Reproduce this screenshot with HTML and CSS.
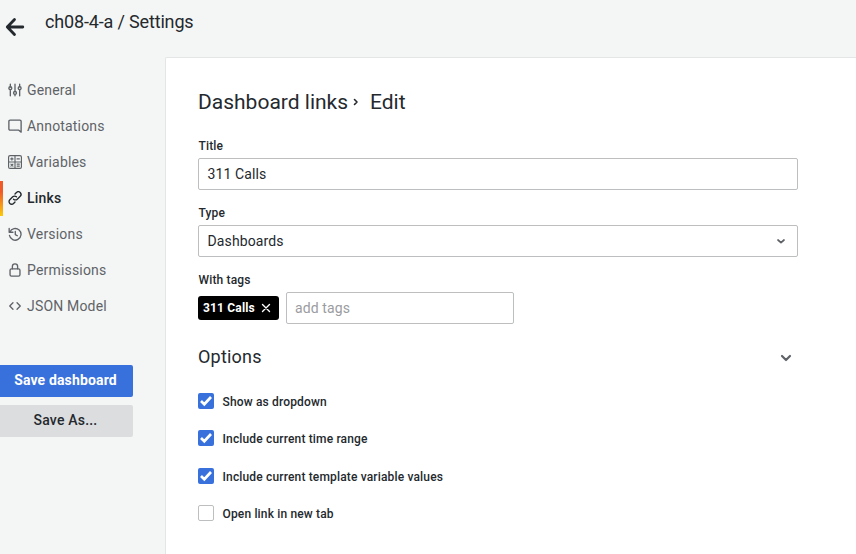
FILE: index.html
```html
<!DOCTYPE html>
<html lang="en">
<head>
<meta charset="utf-8">
<title>ch08-4-a / Settings</title>
<link rel="stylesheet" href="styles.css">
</head>
<body>
<div class="page">
  <header class="toolbar">
    <svg class="back" viewBox="0 0 24 24"><path d="M19.800 12H4.300M11.500 4.500 4.300 12l7.200 7.500"/></svg>
    <h1 class="page-title">ch08-4-a / Settings</h1>
  </header>
  <div class="body">
    <aside class="sidebar">
      <nav class="menu">
        <a class="item"><svg class="icon" viewBox="0 0 24 24"><path d="M4 2v5M4 13v9M12 2v12M12 20v2M20 2v4M20 12v10"/><circle cx="4" cy="9" r="2.500"/><circle cx="12" cy="17" r="2.500"/><circle cx="20" cy="9" r="2.500"/></svg>General</a>
        <a class="item"><svg class="icon" viewBox="0 0 24 24"><path d="M22.500 22.500 18 19H3.500a2 2 0 0 1-2-2V4a2 2 0 0 1 2-2h17a2 2 0 0 1 2 2z"/></svg>Annotations</a>
        <a class="item"><svg class="icon thin" viewBox="0 0 24 24"><rect x="1" y="1" width="22" height="22" rx="2.500"/><path d="M12 1v22M1 12h22M4.700 6.700h4M6.700 4.700v4M15.500 6.700h4M15.500 15.500h4M15.500 19h4M5 15.500l3.500 3.500M8.500 15.500 5 19"/></svg>Variables</a>
        <a class="item active"><svg class="icon" viewBox="0 0 24 24"><path d="M9.500 14a4.500 4.500 0 0 0 6.400 0l5-5a4.500 4.500 0 0 0-6.400-6.400l-2.500 2.500M14.500 10a4.500 4.500 0 0 0-6.400 0l-5 5a4.500 4.500 0 0 0 6.400 6.400l2.500-2.500"/></svg>Links</a>
        <a class="item"><svg class="icon" viewBox="0 0 24 24"><path d="M2 2.500v6.500h6.500M3.200 8.500A10 10 0 1 1 2.500 14.500M12.500 7.500v5.500l3.500 2"/></svg>Versions</a>
        <a class="item"><svg class="icon" viewBox="0 0 24 24"><rect x="3.500" y="10" width="17" height="12.500" rx="2.500"/><path d="M7.500 10V6a4.500 4.500 0 0 1 9 0v4"/></svg>Permissions</a>
        <a class="item"><svg class="icon" viewBox="0 0 24 24"><path d="M8.500 6.500 3 12l5.500 5.500M15.500 6.500 21 12l-5.500 5.500"/></svg>JSON Model</a>
      </nav>
      <div class="actions">
        <button class="button primary">Save dashboard</button>
        <button class="button secondary">Save As...</button>
      </div>
    </aside>
    <main class="content">
      <h2 class="heading"><span class="crumb-root">Dashboard links</span><svg class="crumb" viewBox="0 0 12 12"><path d="m4.500 3.500 2.500 2.500-2.500 2.500"/></svg><span>Edit</span></h2>
      <div class="field">
        <label class="label">Title</label>
        <div class="input">311 Calls</div>
      </div>
      <div class="field">
        <label class="label">Type</label>
        <div class="input select">Dashboards<svg class="caret" viewBox="0 0 16 16"><path d="m5 7 3 2.700L11 7"/></svg></div>
      </div>
      <div class="field">
        <label class="label">With tags</label>
        <div class="tags">
          <span class="tag">311 Calls<svg class="close" viewBox="0 0 10 10"><path d="m1.500 1.500 7 7M8.500 1.500l-7 7"/></svg></span>
          <div class="input tag-input">add tags</div>
        </div>
      </div>
      <div class="section">
        <h3 class="section-title">Options</h3>
        <svg class="section-caret" viewBox="0 0 16 16"><path d="m4 6 4 4 4-4"/></svg>
      </div>
      <div class="checks">
        <label class="check"><span class="box checked"><svg viewBox="0 0 16 16"><path d="m3 8 3.300 3.200L13 4"/></svg></span><span class="check-text">Show as dropdown</span></label>
        <label class="check"><span class="box checked"><svg viewBox="0 0 16 16"><path d="m3 8 3.300 3.200L13 4"/></svg></span><span class="check-text">Include current time range</span></label>
        <label class="check"><span class="box checked"><svg viewBox="0 0 16 16"><path d="m3 8 3.300 3.200L13 4"/></svg></span><span class="check-text">Include current template variable values</span></label>
        <label class="check"><span class="box"></span><span class="check-text">Open link in new tab</span></label>
      </div>
    </main>
  </div>
</div>
</body>
</html>
```
FILE: styles.css
```css
* { box-sizing: border-box; }
body {
  margin: 0;
  font-family: Roboto, "Liberation Sans", sans-serif;
  font-size: 14px;
  line-height: 22px;
  letter-spacing: 0.1px;
  color: #24292e;
  background: #f4f6f5;
}
svg { fill: none; stroke: currentColor; stroke-linecap: round; stroke-linejoin: round; flex: none; }
h1, h2, h3 { margin: 0; font-weight: 400; }
.page { height: 554px; display: flex; flex-direction: column; overflow: hidden; }
.toolbar { height: 57px; flex: none; display: flex; align-items: flex-start; padding-left: 3px; }
.back { width: 24px; height: 24px; margin-top: 15px; stroke-width: 2.800; }
.page-title { font-size: 18px; line-height: 22px; margin: 11px 0 0 18px; letter-spacing: -0.16px; }
.body { flex: 1; display: flex; min-height: 0; }
.sidebar { width: 165px; flex: none; padding-top: 15px; }
.menu { display: flex; flex-direction: column; }
.item {
  height: 36px;
  display: flex;
  align-items: center;
  gap: 5px;
  padding-left: 8px;
  color: #5f6368;
  letter-spacing: 0.18px;
}
.icon { width: 14px; height: 14px; stroke-width: 2.300; }
.thin { stroke-width: 2; }
.active {
  color: #24292e;
  font-weight: 500;
  background: linear-gradient(#f05a28 30%, #fbca0a) left bottom / 3px 35px no-repeat;
}
.actions { display: flex; flex-direction: column; gap: 8px; margin-top: 41px; width: 133px; }
.button {
  height: 32px;
  border: 0;
  padding: 0 2px 2px 0;
  font: 500 14px/22px Roboto, sans-serif;
  letter-spacing: 0.15px;
  border-radius: 0 2px 2px 0;
}
.primary { background: #3871dc; color: #fff; font-weight: 700; }
.secondary { background: #dcdddf; color: #24292e; letter-spacing: 0.2px; }
.content { flex: 1; background: #fff; border: solid #e4e5e6; border-width: 1px 0 0 1px; padding: 32px 58px 0 32px; border-top-left-radius: 2px; }
.heading { display: flex; align-items: center; height: 24px; font-size: 21px; line-height: 24px; margin: 0 0 24px; letter-spacing: 0; }
.crumb-root { width: 151px; white-space: nowrap; }
.crumb { width: 12px; height: 12px; margin: 0 8px 0 1px; stroke-width: 1.600; }
.field { margin-bottom: 15px; }
.label { display: block; font-size: 12px; font-weight: 500; line-height: 16px; margin: 0 0 4px 0.5px; letter-spacing: 0.15px; }
.input {
  height: 32px;
  display: flex;
  align-items: center;
  border: 1px solid #bdbec0;
  border-radius: 2px;
  padding: 0 8px 0 8.500px;
  letter-spacing: 0.12px;
}
.select { justify-content: space-between; }
.caret { width: 16px; height: 16px; color: #5f6368; stroke-width: 1.700; }
.tags { display: flex; align-items: center; gap: 7px; }
.tag {
  height: 24px;
  width: 81px;
  display: flex;
  align-items: center;
  justify-content: space-between;
  padding: 0 8px 0 5px;
  border-radius: 3px;
  background: #000;
  color: #fff;
  font-size: 12px;
  font-weight: 700;
  letter-spacing: 0.17px;
}
.close { width: 10px; height: 10px; stroke-width: 1.400; }
.tag-input { width: 228px; padding-left: 8px; color: #9a9c9f; }
.section { display: flex; align-items: center; justify-content: space-between; height: 24px; margin-top: 21px; padding-right: 4px; }
.section-title { font-size: 18px; line-height: 22px; letter-spacing: 0.2px; }
.section-caret { width: 16px; height: 16px; color: #5f6368; stroke-width: 2.200; margin-top: 2px; }
.checks { display: flex; flex-direction: column; gap: 21.400px; margin-top: 24px; }
.check { display: flex; align-items: center; gap: 8.500px; font-size: 12px; font-weight: 500; line-height: 16px; letter-spacing: 0.16px; height: 16px; }
.check-text { padding-top: 2px; }
.box { width: 16px; height: 16px; flex: none; border: 1px solid #bdbec0; border-radius: 2px; }
.checked { border: 0; background: #3871dc; color: #fff; }
.checked svg { display: block; stroke-width: 2.700; stroke-linecap: butt; stroke-linejoin: miter; }
```
